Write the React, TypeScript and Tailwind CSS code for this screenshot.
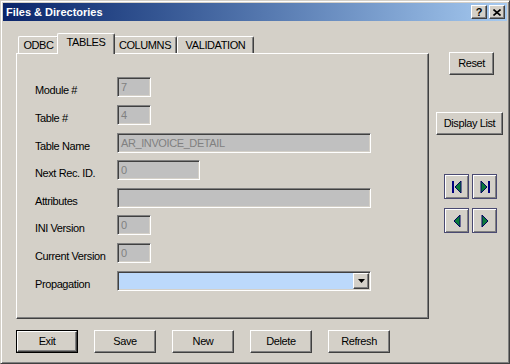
import React from "react";

const font = { fontFamily: '"Liberation Sans", Arial, sans-serif' };

const raised =
  "border border-t-white border-l-white border-r-[#404040] border-b-[#404040] shadow-[inset_-1px_-1px_0_#808080] bg-[#d4d0c8]";
const sunken =
  "border border-t-[#808080] border-l-[#808080] border-r-white border-b-white shadow-[inset_1px_1px_0_#404040,inset_-1px_-1px_0_#d4d0c8]";

const rows = [
  { label: "Module #", value: "7", w: "w-[34px]", mt: "mt-[23px]" },
  { label: "Table #", value: "4", w: "w-[34px]", mt: "mt-[8px]" },
  { label: "Table Name", value: "AR_INVOICE_DETAIL", w: "w-[254px]", mt: "mt-[8px]" },
  { label: "Next Rec. ID.", value: "0", w: "w-[83px]", mt: "mt-[7px]" },
  { label: "Attributes", value: "", w: "w-[254px]", mt: "mt-[8px]" },
  { label: "INI Version", value: "0", w: "w-[34px]", mt: "mt-[7px]" },
  { label: "Current Version", value: "0", w: "w-[34px]", mt: "mt-[8px]" },
];

const tabs = [
  { name: "ODBC", cls: "w-[41px] h-[17px]" },
  { name: "TABLES", cls: "w-[58px] h-[21px] -mx-[2px] -mb-px z-10 pb-[3px]", active: true },
  { name: "COLUMNS", cls: "w-[64px] h-[17px]" },
  { name: "VALIDATION", cls: "w-[77px] h-[17px]" },
];

function NavIcon({ kind }: { kind: "first" | "last" | "prev" | "next" }) {
  const left = kind === "first" || kind === "prev";
  const bar = kind === "first" || kind === "last";
  return (
    <svg width="14" height="14" viewBox="0 0 14 14">
      {bar && <rect x={left ? 2 : 10} y="1" width="2" height="12" fill="#000080" />}
      <polygon
        points={left ? "11,1 5,7 11,13" : "3,1 9,7 3,13"}
        fill="#0a7a3a"
        stroke="#000060"
        strokeWidth="1"
        transform={bar ? "" : left ? "translate(-1,0)" : "translate(1,0)"}
      />
    </svg>
  );
}

function NavButton({ kind }: { kind: "first" | "last" | "prev" | "next" }) {
  return (
    <div className="w-[25px] h-[25px] border border-[#4a4a72] bg-[#d4d0c8] shadow-[inset_1px_1px_0_#ffffff,inset_-1px_-1px_0_#808080] flex items-center justify-center">
      <NavIcon kind={kind} />
    </div>
  );
}

export default function App() {
  return (
    <div
      style={font}
      className="w-[510px] h-[364px] bg-[#d4d0c8] border border-t-[#d4d0c8] border-l-[#d4d0c8] border-r-[#404040] border-b-[#404040] shadow-[inset_1px_1px_0_#ffffff,inset_-1px_-1px_0_#808080] p-[2px] flex flex-col text-[11px] text-black tracking-[-0.4px] overflow-hidden"
    >
      <div className="h-[18px] bg-linear-to-r from-[#0a246a] to-[#a6caf0] flex items-center pl-[3px] pr-[2px] shrink-0">
        <span className="text-white font-bold text-[11px] tracking-[0px] flex-1">Files &amp; Directories</span>
        <div className={`${raised} w-[16px] h-[14px] flex items-center justify-center text-[11px] font-bold leading-none`}>?</div>
        <div className={`${raised} w-[16px] h-[14px] flex items-center justify-center ml-[2px]`}>
          <svg width="8" height="7" viewBox="0 0 8 7">
            <path d="M0.5 0.5 L7.5 6.5 M7.5 0.5 L0.5 6.5" stroke="#000" strokeWidth="1.6" />
          </svg>
        </div>
      </div>

      <div className="flex flex-1">
        <div className="flex flex-col ml-[13px]">
          <div className="flex items-end h-[20px] mt-[12px] pl-[2px]">
            {tabs.map((t) => (
              <div
                key={t.name}
                className={`${t.cls} relative bg-[#d4d0c8] border-t border-l border-t-white border-l-white border-r border-r-[#404040] shadow-[inset_-1px_0_0_#808080] rounded-t-[2px] flex items-center justify-center`}
              >
                {t.name}
              </div>
            ))}
          </div>

          <div className="w-[413px] h-[266px] border border-t-white border-l-white border-r-[#404040] border-b-[#404040] shadow-[inset_-1px_-1px_0_#808080] pl-[18px] flex flex-col">
            {rows.map((r) => (
              <div key={r.label} className={`${r.mt} flex items-end h-[20px]`}>
                <span className="w-[82px] leading-[13px]">{r.label}</span>
                <div className={`${sunken} ${r.w} h-[20px] bg-[#c0c0c0] text-[#808080] pl-[3px] flex items-center leading-none`}>
                  {r.value}
                </div>
              </div>
            ))}
            <div className="mt-[8px] flex items-end h-[20px]">
              <span className="w-[82px] leading-[13px]">Propagation</span>
              <div className={`${sunken} w-[254px] h-[20px] bg-[#bcd9fb] flex justify-end p-px`}>
                <div className={`${raised} w-[16px] h-full flex items-center justify-center`}>
                  <svg width="7" height="4" viewBox="0 0 7 4">
                    <polygon points="0,0 7,0 3.5,4" fill="#000" />
                  </svg>
                </div>
              </div>
            </div>
          </div>

          <div className="flex gap-[16px] mt-[11px]">
            {["Exit", "Save", "New", "Delete", "Refresh"].map((b, i) =>
              i === 0 ? (
                <div key={b} className="w-[62px] h-[23px] border border-black">
                  <div className={`${raised} w-full h-full flex items-center justify-center`}>{b}</div>
                </div>
              ) : (
                <div key={b} className={`${raised} w-[62px] h-[23px] flex items-center justify-center`}>
                  {b}
                </div>
              )
            )}
          </div>
        </div>

        <div className="flex flex-col items-start">
          <div className={`${raised} ml-[20px] mt-[31px] w-[45px] h-[23px] flex items-center justify-center`}>Reset</div>
          <div className={`${raised} ml-[7px] mt-[37px] w-[67px] h-[23px] flex items-center justify-center`}>Display List</div>
          <div className="ml-[15px] mt-[39px] flex gap-[3px]">
            <NavButton kind="first" />
            <NavButton kind="last" />
          </div>
          <div className="ml-[15px] mt-[9px] flex gap-[3px]">
            <NavButton kind="prev" />
            <NavButton kind="next" />
          </div>
        </div>
      </div>
    </div>
  );
}
